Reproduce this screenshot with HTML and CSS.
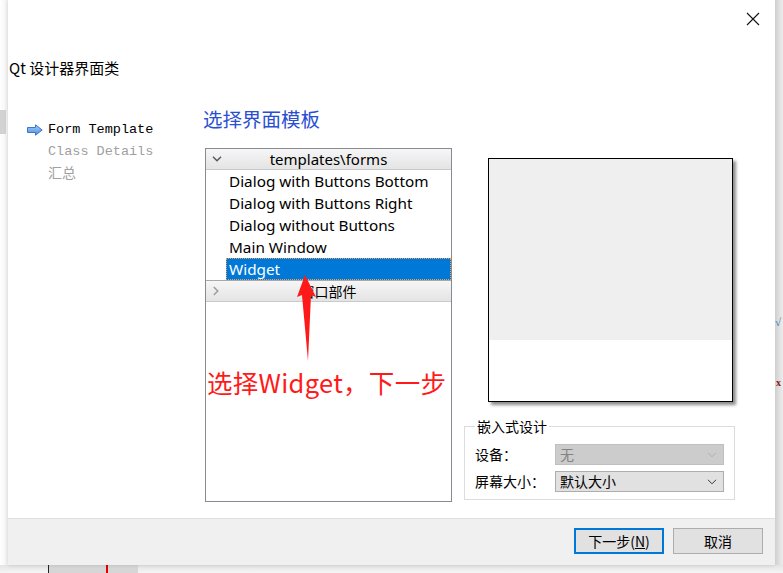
FILE: index.html
```html
<!DOCTYPE html>
<html>
<head>
<meta charset="utf-8">
<link rel="stylesheet" href="styles.css">
</head>
<body>
<div class="screen">
  <div class="row">
    <div class="left-strip"><div class="left-block"></div></div>
    <div class="dialog">
      <div class="titlebar">
        <svg class="close" width="14" height="14" viewBox="0 0 14 14"><path d="M1 1 L13 13 M13 1 L1 13" stroke="#111" stroke-width="1.1" fill="none"/></svg>
      </div>
      <div class="heading">Qt 设计器界面类</div>
      <div class="body">
        <div class="nav">
          <div class="nav-item current">
            <svg class="nav-arrow" width="16" height="12" viewBox="0 0 16 12"><defs><linearGradient id="ag" x1="0" y1="0" x2="0" y2="1"><stop offset="0" stop-color="#a8cdf5"/><stop offset="1" stop-color="#4c8fe0"/></linearGradient></defs><path d="M0.5 3.5 H8.5 V0.8 L15.2 6 L8.5 11.2 V8.5 H0.5 Z" fill="url(#ag)" stroke="#3b78c9" stroke-width="1"/></svg>
            <span>Form Template</span>
          </div>
          <div class="nav-item muted">Class Details</div>
          <div class="nav-item muted cjk">汇总</div>
        </div>
        <div class="main">
          <div class="page-title">选择界面模板</div>
          <div class="content">
            <div class="tree">
              <div class="tree-head">
                <svg class="chev" width="10" height="6" viewBox="0 0 10 6"><path d="M1 0.8 L5 4.8 L9 0.8" stroke="#555" stroke-width="1.4" fill="none"/></svg>
                <span>templates\forms</span>
              </div>
              <div class="tree-item">Dialog with Buttons Bottom</div>
              <div class="tree-item">Dialog with Buttons Right</div>
              <div class="tree-item">Dialog without Buttons</div>
              <div class="tree-item">Main Window</div>
              <div class="tree-item selected">Widget</div>
              <div class="tree-head second">
                <svg class="chev" width="6" height="10" viewBox="0 0 6 10"><path d="M0.8 1 L4.8 5 L0.8 9" stroke="#999" stroke-width="1.4" fill="none"/></svg>
                <span>窗口部件</span>
              </div>
            </div>
            <div class="side">
              <div class="preview"><div class="preview-top"></div></div>
              <fieldset class="group">
                <legend>嵌入式设计</legend>
                <div class="form-grid">
                  <span class="lbl">设备：</span>
                  <div class="combo disabled"><span>无</span><svg width="10" height="6" viewBox="0 0 10 6"><path d="M1 0.8 L5 4.8 L9 0.8" stroke="#b0b0b0" stroke-width="1" fill="none"/></svg></div>
                  <span class="lbl">屏幕大小：</span>
                  <div class="combo"><span>默认大小</span><svg width="10" height="6" viewBox="0 0 10 6"><path d="M1 0.8 L5 4.8 L9 0.8" stroke="#333" stroke-width="1" fill="none"/></svg></div>
                </div>
              </fieldset>
            </div>
          </div>
        </div>
      </div>
      <div class="footer">
        <button class="btn primary">下一步(<u>N</u>)</button>
        <button class="btn">取消</button>
      </div>
      <svg class="annot-arrow" width="30" height="100" viewBox="0 0 30 100"><path d="M8 0 L0 22 L5 20 L11 86 L14 20 L19 22 Z" fill="#ff1a1a"/></svg>
      <div class="annot-text">选择Widget，下一步</div>
    </div>
    <div class="right-strip"><span class="rs-v">√</span><span class="rs-x">x</span></div>
  </div>
  <div class="bottom-strip"><div class="bs-block"><div class="bs-red"></div></div></div>
</div>
</body>
</html>
```

FILE: styles.css
```css
* { box-sizing: border-box; }
html, body { margin: 0; padding: 0; }
body {
  width: 783px;
  height: 573px;
  overflow: hidden;
  background: #ffffff;
  font-family: "Noto Sans", "Noto Sans CJK SC", sans-serif;
  color: #000;
}
.screen { display: flex; flex-direction: column; width: 783px; height: 573px; }
.row { display: flex; height: 565px; }
.left-strip {
  width: 8px;
  background: linear-gradient(to right, #ffffff, #f2f2f2);
}
.left-block { margin-top: 110px; height: 24px; background: #d2d2d2; width: 6px; }
.right-strip {
  width: 8px;
  background: linear-gradient(to right, #cfcfcf, #e2e2e2 60%, #ececec);
  position: relative;
  overflow: hidden;
}
.rs-v { position: absolute; left: 0; top: 316px; color: #1e6fa8; font: italic 11px "Liberation Serif", serif; }
.rs-x { position: absolute; left: 1px; top: 377px; color: #8b1a1a; font: bold 10px "Liberation Serif", serif; }
.bottom-strip {
  height: 8px;
  background: linear-gradient(to bottom, #e4e4e4, #f5f5f5);
  padding-left: 48px;
}
.bs-block {
  width: 90px; height: 8px; background: #d6d6d6;
  border-left: 1px solid #222;
  padding-left: 57px;
}
.bs-red { width: 2px; height: 8px; background: #e00000; }

.dialog {
  width: 767px;
  height: 565px;
  background: #fff;
  display: flex;
  flex-direction: column;
  position: relative;
  box-shadow: 0 0 4px rgba(0,0,0,0.15);
}
.titlebar { height: 40px; display: flex; justify-content: flex-end; align-items: flex-start; padding: 12px 15px 0 0; }
.close { display: block; }
.heading {
  margin-top: 18px;
  padding-left: 1px;
  font-family: "Noto Sans CJK SC", sans-serif;
  font-size: 15px;
  line-height: 20px;
  height: 20px;
  color: #000;
}
.body { display: flex; flex: 1; }
.nav { width: 195px; padding-top: 41px; padding-left: 40px; }
.nav-item {
  font-family: "Liberation Mono", "Noto Sans CJK SC", monospace;
  font-size: 13.5px;
  line-height: 21.5px;
  height: 21.5px;
  white-space: nowrap;
  position: relative;
}
.nav-item.muted { color: #a0a0a0; }
.nav-item.cjk { font-family: "Noto Sans CJK SC", sans-serif; font-size: 14px; }
.nav-arrow { position: absolute; left: -21px; top: 5px; }

.main { flex: 1; padding-top: 28px; }
.page-title {
  font-family: "Noto Sans CJK SC", serif;
  font-size: 19.5px;
  line-height: 26px;
  color: #2a4fd0;
  font-weight: 400;
}
.content { display: flex; margin-top: 16px; padding-left: 2px; }
.tree {
  width: 247px;
  height: 354px;
  border: 1px solid #878a93;
  background: #fff;
}
.tree-head {
  height: 21px;
  border-bottom: 1px solid #c9c9c9;
  background: linear-gradient(to bottom, #f6f6f6, #e4e4e4);
  display: flex;
  align-items: center;
  justify-content: center;
  position: relative;
  font-size: 15px;
  line-height: 20px;
}
.tree-head.second { border-top: 1px solid #a9a9a9; height: 22px; font-family: "Noto Sans CJK SC", sans-serif; font-size: 14px; }
.tree-head .chev { position: absolute; left: 6px; top: 7px; }
.tree-head.second .chev { left: 7px; top: 5px; }
.tree-item {
  height: 22px;
  line-height: 22px;
  padding-left: 23px;
  font-size: 15.3px;
  white-space: nowrap;
  color: #000;
}
.tree-item.selected {
  margin-left: 20px;
  padding-left: 3px;
  background: #0078d7;
  color: #fff;
  outline: 1px dotted #f0a050;
  outline-offset: -1px;
}

.side { margin-left: 12px; width: 271px; display: flex; flex-direction: column; }
.preview {
  margin-top: 10px;
  margin-left: 24px;
  width: 245px;
  height: 244px;
  border: 1px solid #000;
  background: #fff;
  box-shadow: 3px 3px 3px rgba(0,0,0,0.45);
}
.preview-top { height: 181px; background: #efefef; }
.group {
  margin: 15px 0 0 0;
  padding: 9px 10px 7px 10px;
  border: 1px solid #dcdcdc;
  width: 271px;
  font-family: "Noto Sans CJK SC", sans-serif;
  font-size: 14px;
}
.group legend {
  padding: 0 2px;
  margin-left: 0;
  line-height: 18px;
  font-size: 14px;
}
.form-grid {
  display: grid;
  grid-template-columns: 80px 169px;
  row-gap: 6px;
  align-items: center;
}
.lbl { line-height: 21px; white-space: nowrap; }
.combo {
  height: 21px;
  border: 1px solid #adadad;
  background: #e1e1e1;
  display: flex;
  align-items: center;
  justify-content: space-between;
  padding: 0 6px 0 4px;
  font-size: 14px;
  line-height: 19px;
}
.combo.disabled { background: #cccccc; border-color: #bfbfbf; color: #838383; }

.footer {
  height: 47px;
  border-top: 1px solid #dfdfdf;
  background: #f0f0f0;
  display: flex;
  justify-content: flex-end;
  align-items: flex-start;
  gap: 9px;
  padding: 9px 12px 0 0;
}
.btn {
  width: 90px;
  height: 26px;
  border: 1px solid #adadad;
  background: #e1e1e1;
  font-family: "Noto Sans CJK SC", sans-serif;
  font-size: 14px;
  color: #000;
  padding: 0;
  line-height: 22px;
}
.btn.primary { border: 2px solid #0078d7; }
.btn u { text-decoration: underline; }

.annot-arrow { position: absolute; left: 289px; top: 275px; }
.annot-text {
  position: absolute;
  left: 199px;
  top: 366px;
  color: #ff1a1a;
  font-family: "Noto Sans CJK SC", sans-serif;
  font-size: 25.5px;
  line-height: 32px;
  white-space: nowrap;
  letter-spacing: 0.3px;
}
```
